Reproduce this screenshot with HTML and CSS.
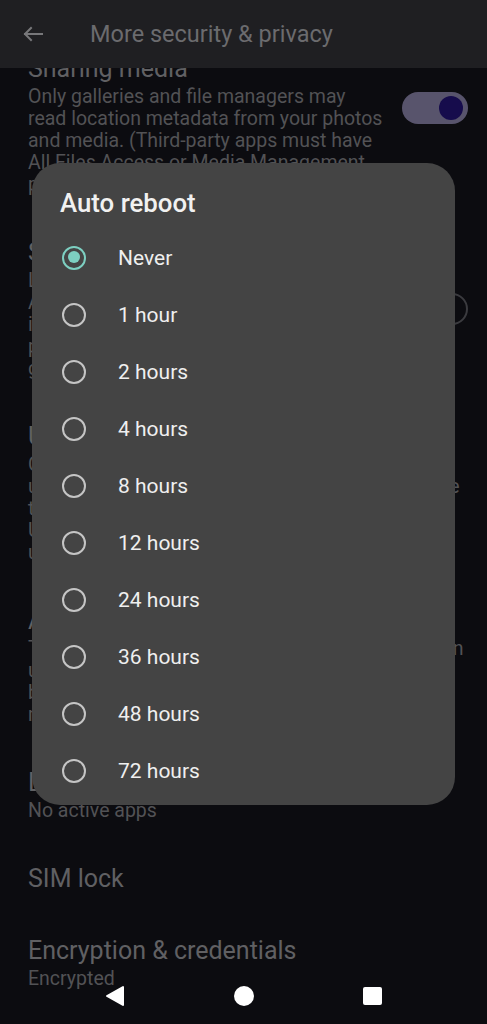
FILE: index.html
```html
<!DOCTYPE html>
<html lang="en">
<head>
<meta charset="UTF-8">
<meta name="viewport" content="width=device-width, initial-scale=1.0">
<title>More security &amp; privacy</title>
<link rel="stylesheet" href="styles.css">
</head>
<body>

<header class="app-bar">
    <svg class="back" width="24" height="24" viewBox="0 0 24 24">
        <path d="M21 12H4M10 6l-6 6 6 6" fill="none" stroke="currentColor" stroke-width="2" stroke-linecap="square"/>
    </svg>
    <h1>More security &amp; privacy</h1>
</header>

<main class="list">
    <div class="pref">
        <div class="pref-text">
            <div class="pref-title">Sharing media</div>
            <div class="pref-summary">Only galleries and file managers may read location metadata from your photos and media. (Third-party apps must have All Files Access or Media Management permission.)</div>
        </div>
        <div class="switch on"></div>
    </div>
    <div class="pref">
        <div class="pref-text">
            <div class="pref-title">Secure app spawning</div>
            <div class="pref-summary">Launch apps in a more secure way than Android which takes slightly longer and increases memory usage by app processes, in exchange for each app getting its own random layout.</div>
        </div>
        <div class="switch off"></div>
    </div>
    <div class="pref">
        <div class="pref-text">
            <div class="pref-title">USB-C port</div>
            <div class="pref-summary">Charging-only when locked, except before first unlock. Data is blocked at the hardware level once the device has been locked by the user, and new USB connections are refused until the device is unlocked again by the owner.</div>
        </div>
    </div>
    <div class="pref">
        <div class="pref-text">
            <div class="pref-title">Auto reboot</div>
            <div class="pref-summary">The device automatically reboots if it has not been unlocked within the chosen time, putting the data back at rest and the encryption keys out of memory until the next unlock.</div>
        </div>
    </div>
    <div class="pref">
        <div class="pref-text">
            <div class="pref-title">Device admin apps</div>
            <div class="pref-summary">No active apps</div>
        </div>
    </div>
    <div class="pref">
        <div class="pref-text">
            <div class="pref-title">SIM lock</div>
        </div>
    </div>
    <div class="pref">
        <div class="pref-text">
            <div class="pref-title">Encryption &amp; credentials</div>
            <div class="pref-summary">Encrypted</div>
        </div>
    </div>
</main>

<div class="scrim">
    <div class="dialog">
        <h2>Auto reboot</h2>
        <ul class="choices">
            <li class="choice checked"><span class="radio"></span>Never</li>
            <li class="choice"><span class="radio"></span>1 hour</li>
            <li class="choice"><span class="radio"></span>2 hours</li>
            <li class="choice"><span class="radio"></span>4 hours</li>
            <li class="choice"><span class="radio"></span>8 hours</li>
            <li class="choice"><span class="radio"></span>12 hours</li>
            <li class="choice"><span class="radio"></span>24 hours</li>
            <li class="choice"><span class="radio"></span>36 hours</li>
            <li class="choice"><span class="radio"></span>48 hours</li>
            <li class="choice"><span class="radio"></span>72 hours</li>
        </ul>
    </div>
</div>

<nav class="nav-bar">
    <span class="nav-btn">
        <svg width="20" height="22" viewBox="0 0 20 22"><path d="M18 2V20L2 11Z" fill="#fff" stroke="#fff" stroke-width="2" stroke-linejoin="round"/></svg>
    </span>
    <span class="nav-btn"><span class="home"></span></span>
    <span class="nav-btn"><span class="recents"></span></span>
</nav>

</body>
</html>
```

FILE: styles.css
```css
body {
    margin: 0;
    width: 487px;
    height: 1024px;
    overflow: hidden;
    position: relative;
    background-color: #0c0c10;
    font-family: Roboto, "Noto Sans", sans-serif;
}

/* top app bar (dimmed by the dialog) */
.app-bar {
    position: relative;
    z-index: 1;
    height: 68px;
    display: flex;
    align-items: center;
    padding-left: 21px;
    background-color: #1f1f22;
    color: #6b6b6e;
}
.app-bar .back {
    color: #77777a;
}
.app-bar h1 {
    margin: 0 0 0 45px;
    font-size: 23.5px;
    font-weight: 400;
}

/* settings list behind the dialog */
.list {
    margin-top: -35px;
}
.pref {
    display: flex;
    padding: 21px 19px 21px 28px;
}
.pref-text {
    flex: 1;
}
.pref-title {
    font-size: 25px;
    line-height: 30px;
    color: #606063;
}
.pref-summary {
    margin-top: 2px;
    font-size: 19.5px;
    line-height: 22px;
    color: #525255;
}
.switch {
    flex: none;
    position: relative;
    box-sizing: border-box;
    width: 66px;
    height: 32px;
    margin-left: 17px;
    border-radius: 16px;
}
.switch.on {
    margin-top: 38px;
    background-color: #58546c;
}
.switch.on::after {
    content: "";
    position: absolute;
    top: 4px;
    right: 5px;
    width: 24px;
    height: 24px;
    border-radius: 50%;
    background-color: #160c4c;
}
.switch.off {
    align-self: center;
    border: 2px solid #3b3b3f;
}
.switch.off::after {
    content: "";
    position: absolute;
    top: 6px;
    left: 6px;
    width: 16px;
    height: 16px;
    border-radius: 50%;
    background-color: #3b3b3f;
}

/* dialog */
.scrim {
    position: absolute;
    inset: 0;
    z-index: 2;
    display: flex;
    justify-content: center;
    align-items: flex-start;
    padding-top: 163px;
}
.dialog {
    width: 423px;
    padding: 24px 0 6px;
    border-radius: 28px;
    background-color: #444444;
}
.dialog h2 {
    margin: 0 0 10px 28px;
    font-size: 25.8px;
    font-weight: 500;
    line-height: 32px;
    color: #f1f1f1;
}
.choices {
    list-style: none;
    margin: 0;
    padding: 0;
}
.choice {
    height: 57px;
    display: flex;
    align-items: center;
    padding-left: 30px;
    font-size: 21px;
    color: #efefef;
}
.radio {
    position: relative;
    box-sizing: border-box;
    width: 24px;
    height: 24px;
    margin-right: 32px;
    border: 2.5px solid #c5c5c5;
    border-radius: 50%;
}
.choice.checked .radio {
    border-color: #7dcfc1;
}
.choice.checked .radio::after {
    content: "";
    position: absolute;
    top: 3.5px;
    left: 3.5px;
    width: 12px;
    height: 12px;
    border-radius: 50%;
    background-color: #7dcfc1;
}

/* system navigation */
.nav-bar {
    position: absolute;
    left: 0;
    right: 0;
    bottom: 0;
    z-index: 3;
    height: 56px;
    display: flex;
    justify-content: center;
    align-items: center;
}
.nav-btn {
    width: 129px;
    display: flex;
    justify-content: center;
}
.home {
    width: 20px;
    height: 20px;
    border-radius: 50%;
    background-color: #fff;
}
.recents {
    width: 19px;
    height: 18px;
    border-radius: 2px;
    background-color: #fff;
}
```
